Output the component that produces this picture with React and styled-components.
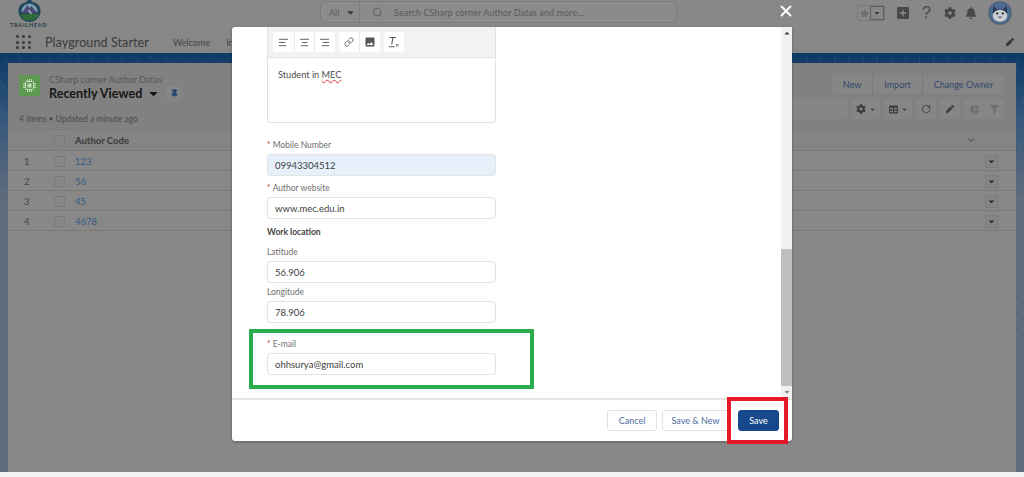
import styled, { createGlobalStyle } from 'styled-components';
import { AlignLeft, AlignCenter, AlignRight, Link, Search, X, RotateCw, ChevronDown, Pin } from 'lucide-react';
import { FaBell, FaCaretDown, FaCaretUp, FaCog, FaFilter, FaPen, FaStar, FaTable } from 'react-icons/fa';
import { MdAddBox, MdImage, MdPieChart } from 'react-icons/md';

const GlobalStyle = createGlobalStyle`
  html, body {
    margin: 0;
    height: 477px;
    overflow: hidden;
    background: #f4f4f4;
    font-family: Lato, "Open Sans", "Liberation Sans", sans-serif;
  }
  * { box-sizing: border-box; }
`;

const Page = styled.div`
  position: relative;
  width: 1024px;
  height: 472px;
  display: flex;
  flex-direction: column;
  background:
    repeating-radial-gradient(ellipse at 30% 20px, transparent 0 13px, rgba(255, 255, 255, 0.05) 13px 14px),
    linear-gradient(180deg, #0e3b66 0px, #0e3b66 56px, #35577c 120px, #5f6b7c 200px);
`;

/* header */
const TopBar = styled.div`
  height: 31px;
  flex: none;
  background: #888;
  display: grid;
  grid-template-columns: 320px 357px 1fr;
  padding-top: 1px;
`;

const LogoBox = styled.div`
  display: flex;
  flex-direction: column;
  align-items: flex-start;
  padding-left: 10px;
  color: #1d3a44;
  font-size: 5.5px;
  font-weight: 700;
  letter-spacing: 0.75px;
  line-height: 7px;
  & svg { margin: -1px 0 0 7px; }
`;

const SearchBox = styled.div`
  height: 22px;
  display: flex;
  align-items: center;
  border: 1px solid #7c7c7c;
  border-radius: 3px;
  background: #8b8b8b;
  color: #585858;
  font-size: 9px;
`;

const ScopePart = styled.div`
  width: 39px;
  height: 100%;
  flex: none;
  display: flex;
  align-items: center;
  gap: 6px;
  padding-left: 8px;
  border-right: 1px solid #7c7c7c;
  color: #5e5e5e;
`;

const SearchText = styled.div`
  display: flex;
  align-items: center;
  gap: 11px;
  padding-left: 12px;
  color: #5a5a5a;
  letter-spacing: 0.1px;
`;

const TopIcons = styled.div`
  display: flex;
  align-items: center;
  justify-content: flex-end;
  height: 24px;
  padding-right: 12px;
  color: #474747;
`;

const StarGroup = styled.div`
  width: 28px;
  height: 16px;
  display: flex;
  margin-right: 10px;
  border: 1px solid #7a7a7a;
  border-radius: 2px;
  & > span {
    flex: 1;
    display: flex;
    align-items: center;
    justify-content: center;
    color: #6f6f6f;
  }
  & > span + span {
    border: 1px solid #5f5f5f;
    color: #3c3c3c;
  }
`;

const Help = styled.span`
  font-size: 16px;
  font-family: "Liberation Sans", sans-serif;
  margin: 0 13px 0 11px;
  line-height: 1;
`;

const Avatar = styled.div`
  width: 24px;
  height: 24px;
  margin-left: 11px;
  border-radius: 50%;
  background: #39506c;
  border: 1px solid #5d6a77;
  overflow: hidden;
`;

const NavBar = styled.div`
  height: 22px;
  flex: none;
  display: flex;
  align-items: center;
  padding: 0 10px 0 16px;
  background: #878787;
  color: #3f3f3f;
`;

const Dots = styled.div`
  width: 15px;
  height: 14px;
  display: grid;
  grid-template-columns: repeat(3, 3px);
  gap: 2.5px 3px;
  margin-right: 14px;
  & > i { height: 3px; border-radius: 50%; background: #3b3b3b; }
`;

const AppName = styled.div`
  font-size: 12.5px;
  color: #3b3b3b;
  letter-spacing: 0.1px;
`;

const NavItem = styled.div`
  font-size: 9px;
  margin-left: ${({ $gap }) => $gap}px;
  color: #454545;
`;

const NavEdit = styled.div`
  margin-left: auto;
  display: flex;
  color: #333;
`;

/* list view panel */
const Panel = styled.div`
  flex: 1;
  margin: 10px 8px 0;
  border-radius: 3px 3px 0 0;
  background: #888;
  display: flex;
  flex-direction: column;
`;

const PanelHead = styled.div`
  height: 67px;
  flex: none;
  display: flex;
  justify-content: space-between;
  padding: 12px 12px 0 11px;
  background: #818181;
  border-bottom: 1px solid #7b7b7b;
`;

const TitleRow = styled.div`
  display: flex;
  gap: 9px;
`;

const ObjectIcon = styled.div`
  width: 21px;
  height: 21px;
  border-radius: 2px;
  background: #5d9a4f;
  display: flex;
  align-items: center;
  justify-content: center;
`;

const Kicker = styled.div`
  font-size: 9.2px;
  line-height: 11px;
  color: #575757;
  margin-top: -1px;
`;

const ListName = styled.div`
  display: flex;
  align-items: center;
  font-size: 12.6px;
  line-height: 15px;
  font-weight: 700;
  color: #161616;
  margin-top: 1px;
`;

const PinButton = styled.div`
  width: 14px;
  height: 15px;
  margin-left: 7px;
  border-radius: 2px;
  background: #868686;
  color: #26486e;
  display: flex;
  align-items: center;
  justify-content: center;
`;

const Meta = styled.div`
  margin-top: 12px;
  font-size: 8.5px;
  line-height: 12px;
  color: #4a4a4a;
`;

const Actions = styled.div`
  display: flex;
  flex-direction: column;
  align-items: flex-end;
  gap: 5px;
`;

const ButtonGroup = styled.div`
  display: flex;
  height: 19px;
  border-radius: 3px;
  background: #868686;
`;

const GroupButton = styled.div`
  width: ${({ $w }) => $w}px;
  display: flex;
  align-items: center;
  justify-content: center;
  font-size: 9px;
  color: #31486a;
  & + & { border-left: 1px solid #7a7a7a; }
`;

const ToolRow = styled.div`
  display: flex;
  gap: 4px;
  height: 20px;
`;

const ToolInput = styled.div`
  width: 200px;
  background: #868686;
  border-radius: 2px;
`;

const ToolButton = styled.div`
  width: ${({ $w }) => $w}px;
  margin-right: ${({ $mr }) => $mr || 0}px;
  display: flex;
  align-items: center;
  justify-content: center;
  gap: 3px;
  border-radius: 2px;
  background: #868686;
  color: ${({ $off }) => ($off ? '#6f6f6f' : '#3d3d3d')};
`;

const TableHead = styled.div`
  height: 21px;
  flex: none;
  display: flex;
  align-items: center;
  padding-right: 40px;
  background: #848484;
  border-bottom: 1px solid #7a7a7a;
  color: #383838;
`;

const Row = styled.div`
  height: 20px;
  flex: none;
  display: flex;
  align-items: center;
  padding: 1px 18px 0 0;
  border-bottom: 1px solid #7a7a7a;
`;

const RowNum = styled.div`
  width: 46px;
  flex: none;
  padding-left: 16px;
  font-size: 9.5px;
  color: #454545;
`;

const Check = styled.div`
  width: 11px;
  height: 11px;
  flex: none;
  margin-right: 10px;
  border: 1px solid #7a7a7a;
  border-radius: 2px;
`;

const ColTitle = styled.div`
  flex: 1;
  font-size: 9.5px;
  font-weight: 700;
  color: #3a3a3a;
`;

const RowLink = styled.div`
  flex: 1;
  font-size: 9.5px;
  color: #335b85;
`;

const RowMenu = styled.div`
  width: 13px;
  height: 13px;
  border: 1px solid #7a7a7a;
  border-radius: 2px;
  background: #858585;
  display: flex;
  align-items: center;
  justify-content: center;
  color: #333;
`;

/* modal */
const CloseIcon = styled(X)`
  position: absolute;
  left: 777px;
  top: 2px;
  color: #fff;
`;

const Modal = styled.div`
  position: absolute;
  left: 232px;
  top: 27px;
  width: 560px;
  height: 414px;
  display: flex;
  flex-direction: column;
  background: #fff;
  border-radius: 3px;
  box-shadow: 0 1px 3px rgba(0, 0, 0, 0.3);
`;

const Body = styled.div`
  flex: 1;
  min-height: 0;
  display: flex;
`;

const Form = styled.div`
  flex: 1;
  min-width: 0;
  padding-left: 35px;
  overflow: hidden;
`;

const Editor = styled.div`
  width: 229px;
  height: 96px;
  border: 1px solid #e2e2e2;
  border-top: 0;
  border-radius: 0 0 3px 3px;
  margin-bottom: 17px;
`;

const EditorTools = styled.div`
  height: 31px;
  display: flex;
  gap: 4px;
  padding: 5px 5px;
  background: #f3f2f2;
  border-bottom: 1px solid #e4e4e4;
`;

const ToolGroup = styled.div`
  display: flex;
  height: 20px;
  background: #fff;
  border-radius: 3px;
  color: #555;
  & > span {
    width: 20.5px;
    display: flex;
    align-items: center;
    justify-content: center;
  }
  & > span + span { border-left: 1px solid #e8e8e8; }
`;

const EditorText = styled.div`
  padding: 11px 10px;
  font-size: 9.2px;
  line-height: 12px;
  color: #4d4d4d;
`;

const Misspelled = styled.span`
  text-decoration: underline wavy #d33;
  text-decoration-thickness: 1px;
`;

const Field = styled.div`
  width: 229px;
  margin-bottom: ${({ $mb }) => $mb}px;
`;

const Label = styled.div`
  font-size: 8.5px;
  line-height: 11px;
  margin-bottom: 3px;
  color: #6f6f6f;
  &::before {
    content: ${({ $req }) => ($req ? '"*"' : 'none')};
    margin-right: 2px;
    color: #c23934;
  }
`;

const Input = styled.div`
  height: 22px;
  display: flex;
  align-items: center;
  padding-left: 7px;
  border: 1px solid #e4e4e4;
  border-radius: 3px;
  font-size: 9.5px;
  color: #3e3e3e;
  background: ${({ $filled }) => ($filled ? '#e6f0fa' : '#fff')};
`;

const SectionLabel = styled.div`
  font-size: 8.5px;
  font-weight: 700;
  line-height: 11px;
  color: #444;
  margin-bottom: 9px;
`;

const ScrollBar = styled.div`
  width: 11px;
  flex: none;
  display: flex;
  flex-direction: column;
  align-items: center;
  background: #f1f1f1;
  color: #444;
`;

const ScrollSpace = styled.div`
  flex: 1;
`;

const ScrollThumb = styled.div`
  width: 100%;
  height: 137px;
  background: #bfbfbf;
`;

const ArrowBox = styled.div`
  height: 12px;
  flex: none;
  display: flex;
  align-items: center;
  justify-content: center;
`;

const Footer = styled.div`
  height: 43px;
  flex: none;
  display: flex;
  align-items: center;
  justify-content: flex-end;
  padding: 0 13px 0 0;
  border-top: 2px solid #e5e5e3;
`;

const FooterButton = styled.div`
  width: ${({ $w }) => $w}px;
  height: 21px;
  margin-left: ${({ $ml }) => $ml}px;
  display: flex;
  align-items: center;
  justify-content: center;
  border-radius: 3px;
  border: 1px solid ${({ $primary }) => ($primary ? '#16498c' : '#e2e2e2')};
  background: ${({ $primary }) => ($primary ? '#16498c' : '#fff')};
  color: ${({ $primary }) => ($primary ? '#fff' : '#4a6c9c')};
  font-size: 9px;
`;

const Highlight = styled.div`
  position: absolute;
  left: ${({ $x }) => $x}px;
  top: ${({ $y }) => $y}px;
  width: ${({ $w }) => $w}px;
  height: ${({ $h }) => $h}px;
  border: 4px solid ${({ $color }) => $color};
  pointer-events: none;
`;

const TrailheadLogo = () => (
  <svg width="25" height="22" viewBox="3 0 24 22">
    <path d="M15 -2 L18 2 C23 3 26 6 26 11 C26 17 21 22 15 22 C9 22 4 17 4 11 C4 6 7 3 12 2 Z" fill="#23475c" />
    <path d="M7 12 C7 7 10 4.5 15 3.5 C20 4.5 23 7 23 12 Z" fill="#7fa3b8" />
    <path d="M7 13 L13 5 L15 8 L17 6 L23 13 Z" fill="#4b4a72" />
    <path d="M6 14 H24 C23 18 20 20.5 15 20.5 C10 20.5 7 18 6 14 Z" fill="#2f6b3a" />
    <path d="M14 10 L17 14" stroke="#d5d5d5" strokeWidth="1.2" />
  </svg>
);

const AstroFace = () => (
  <svg width="22" height="22" viewBox="0 0 24 24">
    <circle cx="12" cy="12" r="12" fill="#4b6a8c" />
    <path d="M5 4 L8 8 H16 L19 4 L20 12 H4 Z" fill="#26344e" />
    <ellipse cx="12" cy="15" rx="8" ry="6.5" fill="#c9ced2" />
    <circle cx="9" cy="12.5" r="1.2" fill="#222" />
    <circle cx="15" cy="12.5" r="1.2" fill="#222" />
    <path d="M10 16 Q12 18 14 16" stroke="#333" fill="none" />
  </svg>
);

const ChipIcon = () => (
  <svg width="13" height="13" viewBox="0 0 13 13" fill="none" stroke="#c4dcbb" strokeWidth="1">
    <rect x="2.5" y="2.5" width="8" height="8" rx="1" />
    <rect x="4.5" y="4.5" width="4" height="4" fill="#c4dcbb" stroke="none" />
    <path d="M4.5 0v2M6.5 0v2M8.5 0v2M4.5 11v2M6.5 11v2M8.5 11v2M0 4.5h2M0 6.5h2M0 8.5h2M11 4.5h2M11 6.5h2M11 8.5h2" />
  </svg>
);

const ClearFormat = () => (
  <svg width="12" height="12" viewBox="0 0 12 12" fill="none" stroke="#555" strokeWidth="1.1">
    <path d="M1.5 1.5 H8 M5 1.5 L3.7 8.5 M1 10.8 H6.5" />
    <path d="M8 8 L10.5 10.5 M10.5 8 L8 10.5" strokeWidth="0.9" />
  </svg>
);

const rows = [
  { n: 1, code: '123' },
  { n: 2, code: '56' },
  { n: 3, code: '45' },
  { n: 4, code: '4678' },
];

const App = () => (
  <>
    <GlobalStyle />
    <Page>
      <TopBar>
        <LogoBox>
          <TrailheadLogo />
          TRAILHEAD
        </LogoBox>
        <SearchBox>
          <ScopePart>
            All <FaCaretDown size={11} color="#3d3d3d" />
          </ScopePart>
          <SearchText>
            <Search size={11} color="#5a5a5a" />
            Search CSharp corner Author Datas and more...
          </SearchText>
        </SearchBox>
        <TopIcons>
          <StarGroup>
            <span><FaStar size={9} /></span>
            <span><FaCaretDown size={8} /></span>
          </StarGroup>
          <MdAddBox size={16} />
          <Help>?</Help>
          <FaCog size={12} />
          <FaBell size={12} style={{ marginLeft: 9 }} />
          <Avatar><AstroFace /></Avatar>
        </TopIcons>
      </TopBar>
      <NavBar>
        <Dots>{Array.from({ length: 9 }, (_, i) => <i key={i} />)}</Dots>
        <AppName>Playground Starter</AppName>
        <NavItem $gap={24}>Welcome</NavItem>
        <NavItem $gap={16}>Insights</NavItem>
        <NavEdit><FaPen size={8} /></NavEdit>
      </NavBar>

      <Panel>
        <PanelHead>
          <div>
            <TitleRow>
              <ObjectIcon><ChipIcon /></ObjectIcon>
              <div>
                <Kicker>CSharp corner Author Datas</Kicker>
                <ListName>
                  Recently Viewed
                  <FaCaretDown size={13} style={{ marginLeft: 5 }} />
                  <PinButton><Pin size={9} fill="#26486e" /></PinButton>
                </ListName>
              </div>
            </TitleRow>
            <Meta>4 items • Updated a minute ago</Meta>
          </div>
          <Actions>
            <ButtonGroup>
              <GroupButton $w={40}>New</GroupButton>
              <GroupButton $w={50}>Import</GroupButton>
              <GroupButton $w={82}>Change Owner</GroupButton>
            </ButtonGroup>
            <ToolRow>
              <ToolInput />
              <ToolButton $w={28}><FaCog size={10} /><FaCaretDown size={7} /></ToolButton>
              <ToolButton $w={28}><FaTable size={9} /><FaCaretDown size={7} /></ToolButton>
              <ToolButton $w={20}><RotateCw size={10} /></ToolButton>
              <ToolButton $w={20}><FaPen size={8} /></ToolButton>
              <ToolButton $w={20} $mr={-4} $off><MdPieChart size={11} /></ToolButton>
              <ToolButton $w={20} $off><FaFilter size={9} /></ToolButton>
            </ToolRow>
          </Actions>
        </PanelHead>
        <TableHead>
          <RowNum />
          <Check />
          <ColTitle>Author Code</ColTitle>
          <ChevronDown size={10} />
        </TableHead>
        {rows.map((r) => (
          <Row key={r.n}>
            <RowNum>{r.n}</RowNum>
            <Check />
            <RowLink>{r.code}</RowLink>
            <RowMenu><FaCaretDown size={9} /></RowMenu>
          </Row>
        ))}
      </Panel>

      <CloseIcon size={18} strokeWidth={2.6} />

      <Modal>
        <Body>
          <Form>
            <Editor>
              <EditorTools>
                <ToolGroup>
                  <span><AlignLeft size={11} /></span>
                  <span><AlignCenter size={11} /></span>
                  <span><AlignRight size={11} /></span>
                </ToolGroup>
                <ToolGroup>
                  <span><Link size={10} /></span>
                  <span><MdImage size={12} /></span>
                </ToolGroup>
                <ToolGroup>
                  <span><ClearFormat /></span>
                </ToolGroup>
              </EditorTools>
              <EditorText>Student in <Misspelled>MEC</Misspelled></EditorText>
            </Editor>
            <Field $mb={7}>
              <Label $req>Mobile Number</Label>
              <Input $filled>09943304512</Input>
            </Field>
            <Field $mb={8}>
              <Label $req>Author website</Label>
              <Input>www.mec.edu.in</Input>
            </Field>
            <SectionLabel>Work location</SectionLabel>
            <Field $mb={4}>
              <Label>Latitude</Label>
              <Input>56.906</Input>
            </Field>
            <Field $mb={16}>
              <Label>Longitude</Label>
              <Input>78.906</Input>
            </Field>
            <Field $mb={0}>
              <Label $req>E-mail</Label>
              <Input>ohhsurya@gmail.com</Input>
            </Field>
          </Form>
          <ScrollBar>
            <ArrowBox><FaCaretUp size={8} /></ArrowBox>
            <ScrollSpace />
            <ScrollThumb />
            <ArrowBox><FaCaretDown size={8} color="#888" /></ArrowBox>
          </ScrollBar>
        </Body>
        <Footer>
          <FooterButton $w={50}>Cancel</FooterButton>
          <FooterButton $w={67} $ml={5}>Save &amp; New</FooterButton>
          <FooterButton $w={41} $ml={9} $primary>Save</FooterButton>
        </Footer>
        <Highlight $x={17} $y={302} $w={285} $h={60} $color="#2bad4e" />
        <Highlight $x={495} $y={370} $w={61} $h={47} $color="#e8182b" />
      </Modal>
    </Page>
  </>
);

export default App;
